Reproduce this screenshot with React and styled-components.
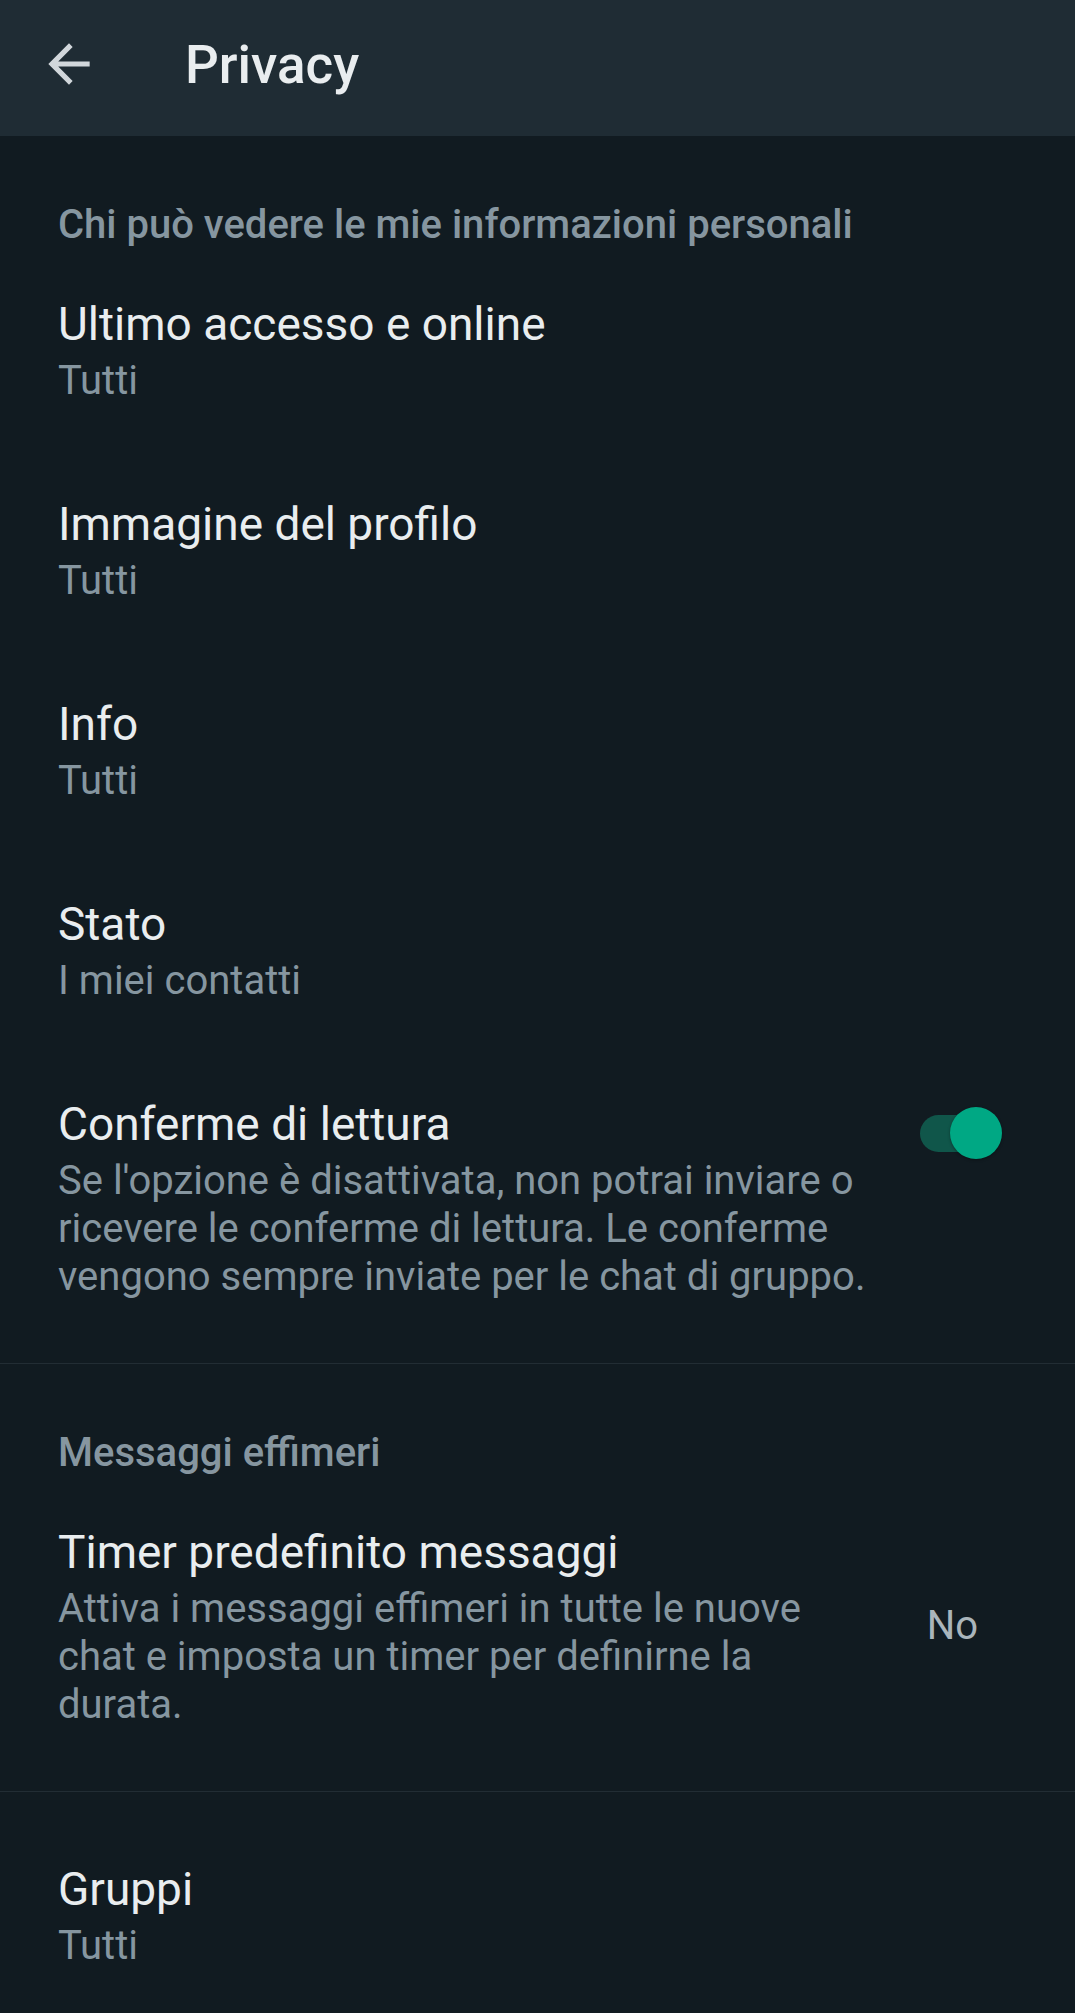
import React from "react";
import styled, { createGlobalStyle } from "styled-components";

const GlobalStyle = createGlobalStyle`
  html, body {
    margin: 0;
    padding: 0;
    background: #111b21;
  }
  body {
    font-family: Roboto, "Noto Sans", "Liberation Sans", sans-serif;
    -webkit-font-smoothing: antialiased;
  }
`;

const sections = [
  {
    title: "Chi può vedere le mie informazioni personali",
    items: [
      { label: "Ultimo accesso e online", sub: ["Tutti"] },
      { label: "Immagine del profilo", sub: ["Tutti"] },
      { label: "Info", sub: ["Tutti"] },
      { label: "Stato", sub: ["I miei contatti"] },
      {
        label: "Conferme di lettura",
        sub: [
          "Se l'opzione è disattivata, non potrai inviare o",
          "ricevere le conferme di lettura. Le conferme",
          "vengono sempre inviate per le chat di gruppo.",
        ],
        toggle: true,
      },
    ],
  },
  {
    title: "Messaggi effimeri",
    items: [
      {
        label: "Timer predefinito messaggi",
        sub: [
          "Attiva i messaggi effimeri in tutte le nuove",
          "chat e imposta un timer per definirne la",
          "durata.",
        ],
        value: "No",
      },
    ],
  },
  {
    items: [{ label: "Gruppi", sub: ["Tutti"] }],
  },
];

export default function App() {
  return (
    <>
      <GlobalStyle />
      <Screen>
        <TopBar>
          <BackButton aria-label="Indietro">
            <svg width="62" height="62" viewBox="0 0 24 24">
              <path
                fill="#d1d7db"
                d="M20 11H7.83l5.59-5.59L12 4l-8 8 8 8 1.41-1.41L7.83 13H20v-2z"
              />
            </svg>
          </BackButton>
          <Title>Privacy</Title>
        </TopBar>

        {sections.map((section, i) => (
          <React.Fragment key={i}>
            {i > 0 && <Divider />}
            <Section $headless={!section.title}>
              {section.title && <SectionTitle>{section.title}</SectionTitle>}
              {section.items.map((item) => (
                <Row key={item.label}>
                  <RowText>
                    <RowLabel>{item.label}</RowLabel>
                    <RowSub>
                      {item.sub.map((line) => (
                        <span key={line}>{line}</span>
                      ))}
                    </RowSub>
                  </RowText>
                  {item.toggle && (
                    <Switch>
                      <Track />
                      <Thumb />
                    </Switch>
                  )}
                  {item.value && <Value>{item.value}</Value>}
                </Row>
              ))}
            </Section>
          </React.Fragment>
        ))}
      </Screen>
    </>
  );
}

const Screen = styled.div`
  width: 1075px;
  min-height: 2013px;
  background: #111b21;
  color: #e9edef;
`;

const TopBar = styled.header`
  height: 136px;
  background: #1f2c34;
  display: flex;
  align-items: center;
  padding-left: 38px;
  box-sizing: border-box;
`;

const BackButton = styled.div`
  width: 62px;
  height: 62px;
  display: flex;
  margin-top: -8px;
  svg {
    display: block;
  }
`;

const Title = styled.h1`
  margin: -6px 0 0 85px;
  font-size: 53px;
  font-weight: 500;
  color: #e9edef;
  line-height: 1;
`;

const Section = styled.section`
  padding-top: ${(p) => (p.$headless ? "24px" : "67px")};
  padding-bottom: 16px;
`;

const SectionTitle = styled.div`
  padding: 0 58px;
  margin-bottom: 4px;
  font-size: 40px;
  line-height: 44px;
  font-weight: 500;
  color: #8696a0;
`;

const Row = styled.div`
  display: flex;
  align-items: center;
  padding: 43px 0 46px 58px;
`;

const RowText = styled.div`
  flex: 1;
  display: flex;
  flex-direction: column;
`;

const RowLabel = styled.div`
  font-size: 46px;
  line-height: 60px;
  color: #e9edef;
  white-space: nowrap;
`;

const RowSub = styled.div`
  margin-top: 3px;
  font-size: 40px;
  line-height: 48px;
  color: #8696a0;
  span {
    display: block;
    white-space: nowrap;
  }
`;

const Switch = styled.div`
  position: relative;
  align-self: flex-start;
  width: 82px;
  height: 52px;
  margin: 13px 73px 0 0;
`;

const Track = styled.div`
  position: absolute;
  left: 0;
  top: 8px;
  width: 70px;
  height: 37px;
  border-radius: 19px;
  background: #10564a;
`;

const Thumb = styled.div`
  position: absolute;
  right: 0;
  top: 0;
  width: 52px;
  height: 52px;
  border-radius: 50%;
  background: #00a884;
  box-shadow: 0 1px 3px rgba(0, 0, 0, 0.35);
`;

const Value = styled.div`
  margin-right: 97px;
  font-size: 40px;
  line-height: 48px;
  color: #aab5bb;
`;

const Divider = styled.div`
  height: 1px;
  background: #222d34;
`;
